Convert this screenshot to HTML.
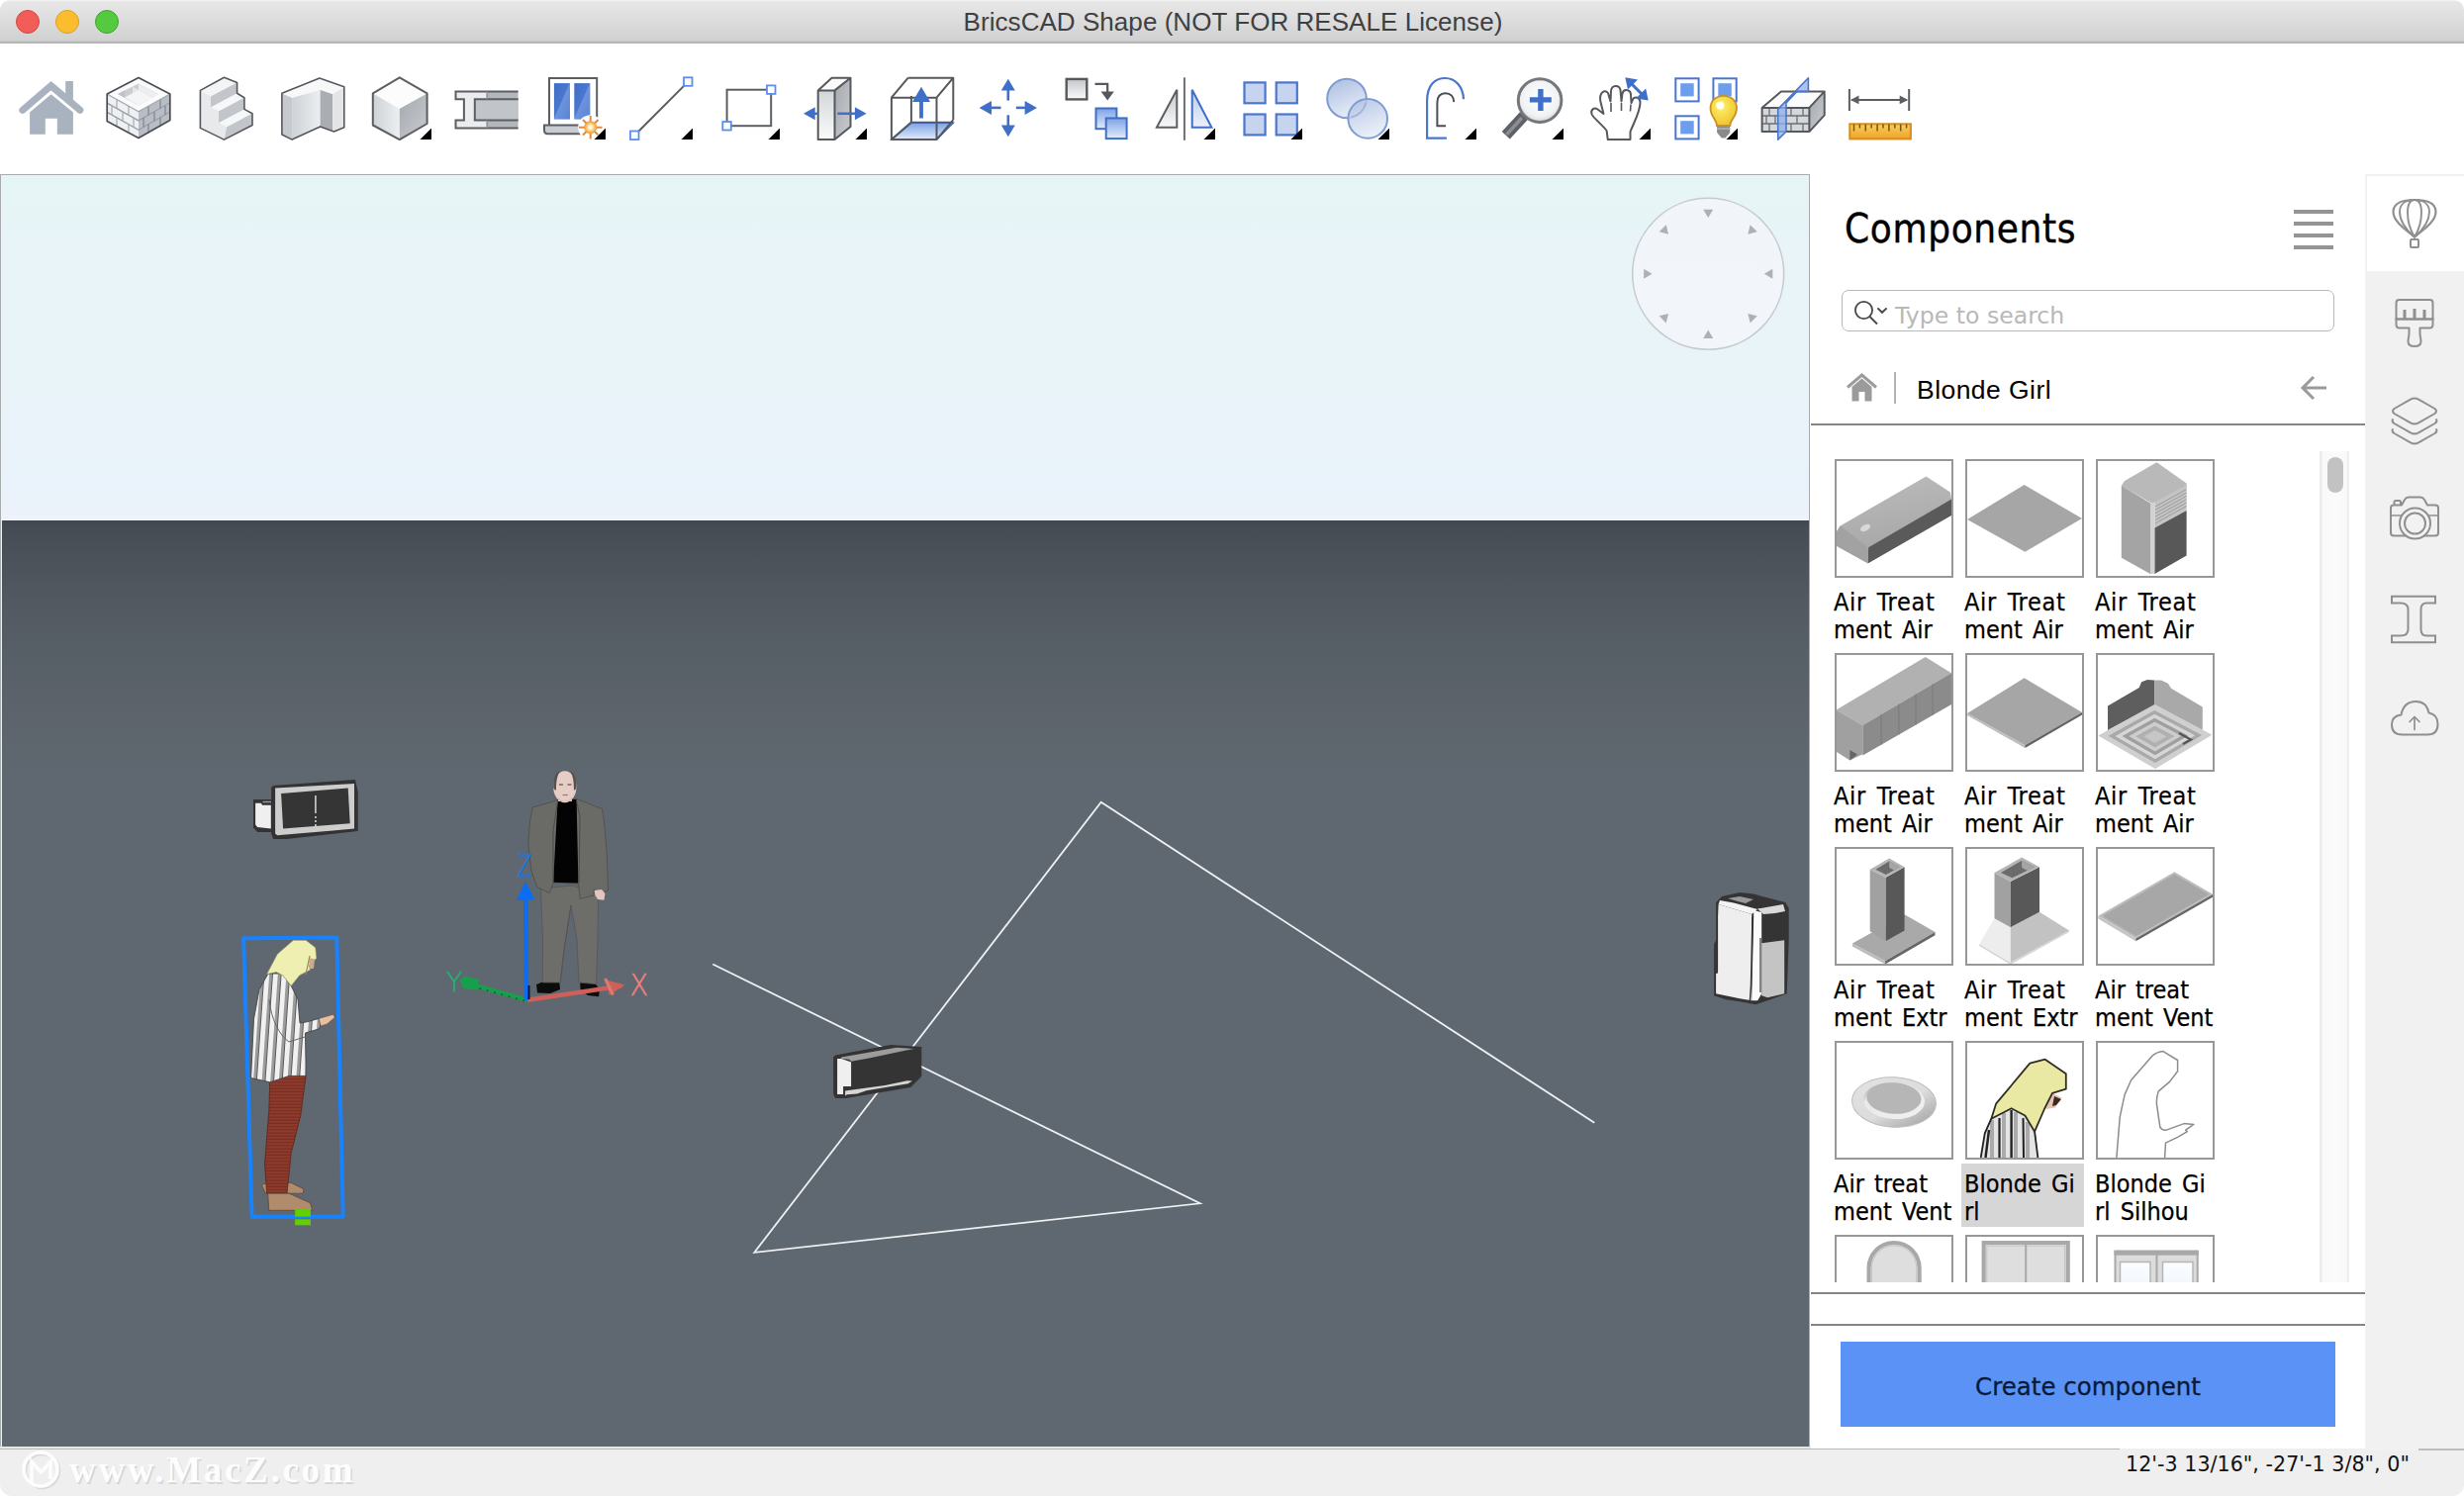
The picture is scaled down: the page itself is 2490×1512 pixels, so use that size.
<!DOCTYPE html>
<html lang="en">
<head>
<meta charset="utf-8">
<title>BricsCAD Shape (NOT FOR RESALE License)</title>
<style>
html,body{margin:0;padding:0;}
body{width:2490px;height:1512px;overflow:hidden;background:#fff;position:relative;font-family:"Liberation Sans","DejaVu Sans",sans-serif;color:#000;}
.abs{position:absolute;}
#titlebar{position:absolute;left:0;top:0;width:2490px;height:43px;background:linear-gradient(#f4f4f4 0,#e7e7e7 2px,#d1d1d1 41px,#c4c4c4 42px,#a9a9a9 43px);border-bottom:1px solid #b4b4b4;border-radius:10px 10px 0 0;}
#titlebar .t{position:absolute;left:0;width:2490px;top:7px;text-align:center;font-size:26px;line-height:30px;color:#404040;letter-spacing:0.05px;padding-left:2px;box-sizing:border-box;}
.tl{position:absolute;top:10px;width:24px;height:24px;border-radius:50%;box-sizing:border-box;}
#toolbar{position:absolute;left:0;top:44px;width:2490px;height:132px;background:#fff;}
.ic{position:absolute;top:33px;width:72px;height:72px;overflow:visible;}
#viewport{position:absolute;left:0;top:176px;width:1829px;height:1287px;box-sizing:border-box;border:1px solid #a9acac;border-width:1px 1px 0 1px;overflow:hidden;background:#5f6770;}
#sky{position:absolute;left:0;top:0;width:1827px;height:349px;background:linear-gradient(#e5f5f5 0%,#e8f4f8 18%,#e9f4f9 35%,#e9f4f9 60%,#e9f3fa 85%,#ebf2fa 96%,#eef2fa 100%);border-bottom:1px solid #f6fafc;box-sizing:border-box;}
#ground{position:absolute;left:0;top:349px;width:1827px;height:940px;background:linear-gradient(#40474e 0px,#454c53 6px,#4b5259 40px,#535a61 90px,#586067 140px,#5c636b 190px,#5e666e 230px,#5f6770 270px,#5f6770 100%);}
#panel{position:absolute;left:1830px;top:176px;width:560px;height:1288px;background:#fff;z-index:2;}
#tabs{position:absolute;left:2390px;top:176px;width:100px;height:1290px;background:#f1f1f1;z-index:2;}
#status{position:absolute;left:0;top:1462px;width:2490px;height:50px;background:linear-gradient(#e6e7e7 0,#e6e7e7 2px,#b7b7b7 2px,#b7b7b7 3.5px,#efefef 3.5px,#efefef 100%);box-sizing:border-box;border-radius:0 0 12px 12px;}
.pf{font-family:"DejaVu Sans","Liberation Sans",sans-serif;}
.th{width:120px;height:120px;box-sizing:border-box;border:2px solid #989898;overflow:hidden;background:#fff;}
.th svg{position:absolute;left:-2px;top:-2px;}
.lb{font-family:"DejaVu Sans Condensed","DejaVu Sans",sans-serif;font-stretch:condensed;font-size:25px;line-height:28px;word-spacing:3px;-webkit-text-stroke:0.25px #000;white-space:pre;color:#000;}
</style>
</head>
<body>
<div id="titlebar">
  <div class="tl" style="left:16px;background:#f25e57;border:1px solid #d5473f;"></div>
  <div class="tl" style="left:56px;background:#fbbd2e;border:1px solid #dc9f26;"></div>
  <div class="tl" style="left:96px;background:#55c93f;border:1px solid #3fa62d;"></div>
  <div class="t">BricsCAD Shape (NOT FOR RESALE License)</div>
</div>
<div id="toolbar">
<svg class="abs" style="left:0;top:0" width="2490" height="132" viewBox="0 44 2490 132">
<defs>
<linearGradient id="gL" x1="0" y1="0" x2="1" y2="0"><stop offset="0" stop-color="#cfd2d6"/><stop offset="1" stop-color="#eceef0"/></linearGradient>
<linearGradient id="gR" x1="0" y1="0" x2="1" y2="1"><stop offset="0" stop-color="#a4a8ad"/><stop offset="1" stop-color="#c9cccf"/></linearGradient>
<linearGradient id="gV" x1="0" y1="0" x2="0" y2="1"><stop offset="0" stop-color="#c3c6ca"/><stop offset="1" stop-color="#fafafa"/></linearGradient>
<linearGradient id="gB" x1="0" y1="0" x2="0" y2="1"><stop offset="0" stop-color="#7ea2e6"/><stop offset="1" stop-color="#e3ecfb"/></linearGradient>
<linearGradient id="gB2" x1="0" y1="0" x2="0" y2="1"><stop offset="0" stop-color="#b9caea"/><stop offset="1" stop-color="#eef2fa"/></linearGradient>
<linearGradient id="gC" x1="0" y1="0" x2="0.4" y2="1"><stop offset="0" stop-color="#a9bce0"/><stop offset="1" stop-color="#e6ecf7"/></linearGradient>
<linearGradient id="gPane" x1="0" y1="0" x2="1" y2="1"><stop offset="0" stop-color="#3f6cc4"/><stop offset="0.48" stop-color="#4a78cf"/><stop offset="0.5" stop-color="#6d93dc"/><stop offset="1" stop-color="#5a84d4"/></linearGradient>
<linearGradient id="gRul" x1="0" y1="0" x2="0" y2="1"><stop offset="0" stop-color="#f8cf5a"/><stop offset="1" stop-color="#eea22c"/></linearGradient>
<radialGradient id="gGlass" cx="0.5" cy="0.45" r="0.6"><stop offset="0" stop-color="#ffffff"/><stop offset="0.7" stop-color="#f1f2f4"/><stop offset="1" stop-color="#c9cdd2"/></radialGradient>
<radialGradient id="gBulb" cx="0.4" cy="0.35" r="0.7"><stop offset="0" stop-color="#fffbe0"/><stop offset="0.25" stop-color="#fbe65a"/><stop offset="1" stop-color="#eec22c"/></radialGradient>
<radialGradient id="gStar" cx="0.5" cy="0.5" r="0.5"><stop offset="0" stop-color="#fff"/><stop offset="0.35" stop-color="#fde9b0"/><stop offset="1" stop-color="#f0962c"/></radialGradient>
<linearGradient id="gSlab" x1="0" y1="0" x2="0" y2="1"><stop offset="0" stop-color="#d3d6d9"/><stop offset="1" stop-color="#fbfbfb"/></linearGradient>
</defs>
<g transform="translate(20 77)"><g fill="#a8b3bf"><polygon points="46.2,5.1 53.9,5.1 53.9,27 46.2,20.5"/><polygon points="10.1,58.8 10.1,36.5 31.6,18.2 53.9,36.5 53.9,58.8 37.8,58.8 37.8,42.7 25.8,42.7 25.8,58.8"/></g><path d="M2.8 34.3 L31.6 9.7 L60.9 34.3" fill="none" stroke="#a8b3bf" stroke-width="7" stroke-linecap="round" stroke-linejoin="miter"/></g>
<g transform="translate(108 77)"><polygon points="0.2,17.9 32,35.7 32,62.4 0.2,45.6" fill="#eef0f2"/><polygon points="32,35.7 63.8,17.9 63.8,44.5 32,62.4" fill="#b9bec6"/><polygon points="32,1.4 63.8,17.9 32,35.7 0.2,17.9" fill="#fbfbfb"/><polygon points="32,7.5 52,18 32,29.5 11,18" fill="#c9cdd2"/><polygon points="32,7.5 52,18 46,21.5 32,14" fill="#eceef0"/><polygon points="26,10.8 40,18 40,25 26,17.5" fill="#e4e6e9"/><polygon points="32,14 46,21.5 32,29.5 18,21.5" fill="#f4f5f6"/><polygon points="11,18 18,14.200 18,21.5 32,29.5 32,29.5" fill="#bfc3c9"/><path d="M0.2 27.1 L32 44.9 L63.8 26.7" stroke="#9aa0a8" stroke-width="1.3" fill="none"/><path d="M0.2 36.4 L32 54.2 L63.8 36.0" stroke="#9aa0a8" stroke-width="1.3" fill="none"/><path d="M10.0 23.4 L10.0 32.6" stroke="#a5abb3" stroke-width="1.2"/><path d="M22.0 30.1 L22.0 39.3" stroke="#a5abb3" stroke-width="1.2"/><path d="M5.0 29.8 L5.0 39.0" stroke="#a5abb3" stroke-width="1.2"/><path d="M16.0 36.0 L16.0 45.2" stroke="#a5abb3" stroke-width="1.2"/><path d="M27.0 42.1 L27.0 51.3" stroke="#a5abb3" stroke-width="1.2"/><path d="M10.0 41.9 L10.0 51.1" stroke="#a5abb3" stroke-width="1.2"/><path d="M22.0 48.6 L22.0 57.8" stroke="#a5abb3" stroke-width="1.2"/><path d="M42.0 30.1 L42.0 39.3" stroke="#7d848d" stroke-width="1.2"/><path d="M54.0 23.4 L54.0 32.6" stroke="#7d848d" stroke-width="1.2"/><path d="M37.0 42.1 L37.0 51.3" stroke="#7d848d" stroke-width="1.2"/><path d="M48.0 36.0 L48.0 45.2" stroke="#7d848d" stroke-width="1.2"/><path d="M59.0 29.8 L59.0 39.0" stroke="#7d848d" stroke-width="1.2"/><path d="M42.0 48.6 L42.0 57.8" stroke="#7d848d" stroke-width="1.2"/><path d="M54.0 41.8 L54.0 51.0" stroke="#7d848d" stroke-width="1.2"/><path d="M0.2 17.9 L32 35.7 L63.8 17.9" fill="none" stroke="#a2a7ae" stroke-width="1.2"/><path d="M32 1.4 L63.8 17.9 L63.8 44.5 L32 62.4 L0.2 45.6 L0.2 17.9 Z" fill="none" stroke="#4a4d52" stroke-width="1.7" stroke-linejoin="round"/></g>
<g transform="translate(196 77)"><polygon points="6.4,14.4 30.5,1.3 43.6,6.4 43.6,17.3 50.9,21.7 50.9,33.4 59,37.8 59,49.5 30.5,64.1 6.4,52.4" fill="#e7e9eb"/><polygon points="30.5,1.3 43.6,6.4 17,20.5 17,31 6.4,26 6.4,14.4" fill="#f3f4f5"/><polygon points="43.600,6.4 43.600,17.3 17,31.500 17,20.500" fill="#c2c5ca"/><polygon points="43.600,17.3 50.900,21.700 25,35.500 17,31.500" fill="#f6f7f8"/><polygon points="50.900,21.700 50.900,33.400 25,47.200 25,35.500" fill="#c2c5ca"/><polygon points="50.900,33.400 59,37.800 33,51.600 25,47.200" fill="#f6f7f8"/><polygon points="59,37.800 59,49.500 30.500,64.100 33,51.600" fill="#c2c5ca"/><polygon points="33,51.600 30.5,64.1 6.4,52.4 6.4,14.4 17,20.5 17,31.5 25,35.5 25,47.2" fill="#e7e9eb"/><path d="M6.4 14.4 L30.5 1.3 L43.6 6.4 L43.6 17.3 L50.9 21.7 L50.9 33.4 L59 37.8 L59 49.5 L30.5 64.1 L6.4 52.4 Z" fill="none" stroke="#55585d" stroke-width="1.6" stroke-linejoin="round"/></g>
<g transform="translate(284 77)"><polygon points="0.9,17.3 11.1,21.7 11.1,64.1 0.9,59" fill="#c6c9cd"/><polygon points="11.1,21.7 39.6,13.7 39.6,50.9 11.1,64.1" fill="url(#gL)"/><polygon points="39.6,13.7 52.1,18.1 52.1,55.3 39.6,50.9" fill="#aaaeb3"/><polygon points="52.1,18.1 63.8,10.8 63.8,51.7 53.5,56.1 52.1,55.3" fill="#e3e5e7"/><polygon points="0.9,17.3 38.9,2 63.8,10.8 52.1,18.1 39.6,13.7 11.1,21.7" fill="#f8f8f8"/><path d="M0.9 17.3 L38.9 2 L63.8 10.8 L63.8 51.7 L53.5 56.1 L39.6 50.9 L11.1 64.1 L0.9 59 Z" fill="none" stroke="#55585d" stroke-width="1.6" stroke-linejoin="round"/></g>
<g transform="translate(372 77)"><polygon points="4.8,17.3 31.8,32.7 31.8,64.1 4.8,49.5" fill="url(#gL)"/><polygon points="31.8,32.7 59.6,17.3 59.6,48 31.8,64.1" fill="url(#gR)"/><polygon points="31.8,1.3 59.6,17.3 31.8,32.7 4.8,17.3" fill="#fcfcfc"/><path d="M31.8 1.3 L59.6 17.3 L59.6 48 L31.8 64.1 L4.8 49.5 L4.8 17.3 Z" fill="none" stroke="#5b5e63" stroke-width="2" stroke-linejoin="round"/><polygon points="52.5,64 64,64 64,52.5" fill="#000"/></g>
<g transform="translate(460 77)"><rect x="32.2" y="15.4" width="31.4" height="37" fill="#b3b7bc"/><rect x="19.8" y="23.2" width="43.8" height="21.2" fill="#c1c4c8"/><path d="M0.5 15.4 L32.2 15.4 L32.2 23.2 L19.8 23.2 L19.8 44.4 L32.2 44.4 L32.2 52.4 L0.5 52.4 L0.5 44.4 L8.9 44.4 L8.9 23.2 L0.5 23.2 Z" fill="#ebecee"/><path d="M63.6 15.4 L0.5 15.4 L0.5 23.2 L8.9 23.2 L8.9 44.4 L0.5 44.4 L0.5 52.4 L63.6 52.4 M63.6 23.2 L19.8 23.2 L19.8 44.4 L63.6 44.4" fill="none" stroke="#5b5e63" stroke-width="2"/><path d="M32.2 15.4 L32.2 23.2 M32.2 44.4 L32.2 52.4" stroke="#8d9096" stroke-width="1.5"/></g>
<g transform="translate(548 77)"><rect x="7" y="2" width="48.200" height="48" fill="#fff" stroke="#5b5e63" stroke-width="2"/><rect x="11.9" y="7.1" width="16.1" height="36.5" fill="url(#gPane)"/><rect x="32.3" y="7.1" width="16.1" height="36.5" fill="url(#gPane)"/><path d="M2 49.5 L40 49.5 L40 58.2 L5.500 58.2 Q2 58.2 2 54.500 Z" fill="#c9cdd1" stroke="#5b5e63" stroke-width="2"/><circle cx="48.7" cy="51.7" r="12.500" fill="#fff"/><path d="M48.7 40 L48.7 63.500 M37 51.7 L60.500 51.7 M41 44 L56.500 59.500 M56.500 44 L41 59.500" stroke="#e8883a" stroke-width="2"/><circle cx="48.7" cy="51.7" r="6.5" fill="url(#gStar)"/><polygon points="52.5,64 64,64 64,52.5" fill="#000"/></g>
<g transform="translate(636 77)"><path d="M5.3 59.7 L59.3 5.6" stroke="#5b5e63" stroke-width="2"/><rect x="1.0" y="55.5" width="8.500" height="8.500" fill="#fff" stroke="#5b8def" stroke-width="1.8"/><rect x="55.0" y="1.3" width="8.500" height="8.500" fill="#fff" stroke="#5b8def" stroke-width="1.8"/><polygon points="52.5,64 64,64 64,52.5" fill="#000"/></g>
<g transform="translate(724 77)"><rect x="10.6" y="13.7" width="44.6" height="36.5" fill="none" stroke="#5b5e63" stroke-width="2"/><rect x="51.0" y="9.4" width="8.500" height="8.500" fill="#fff" stroke="#5b8def" stroke-width="1.8"/><rect x="6.3" y="46.0" width="8.500" height="8.500" fill="#fff" stroke="#5b8def" stroke-width="1.8"/><polygon points="52.5,64 64,64 64,52.5" fill="#000"/></g>
<g transform="translate(812 77)"><polygon points="14.7,14.4 31.5,14.4 31.5,64.1 14.7,64.1" fill="url(#gSlab)"/><polygon points="31.5,14.4 47.5,1.7 47.5,50.9 31.5,64.1" fill="url(#gR)"/><polygon points="14.7,14.4 28.5,1.7 47.5,1.7 31.5,14.4" fill="#fafafa"/><path d="M14.7 14.4 L28.5 1.7 L47.5 1.7 L47.5 50.9 L31.5 64.1 L14.7 64.1 Z M14.7 14.4 L31.5 14.4 L47.5 1.7 M31.5 14.4 L31.5 64.1" fill="none" stroke="#55585d" stroke-width="2" stroke-linejoin="round"/><g fill="#3f6fc6" stroke="#3f6fc6"><polygon points="0,37.8 11.7,31.300 11.7,44.300" stroke="none"/><path d="M11 37.8 L15 37.8" stroke-width="2.5"/><path d="M34.4 37.8 L52.500 37.8" stroke-width="2.5"/><polygon points="63.6,37.8 51.900,31.300 51.900,44.300" stroke="none"/></g><polygon points="52.5,64 64,64 64,52.5" fill="#000"/></g>
<g transform="translate(900 77)"><polygon points="0.9,64.1 20.9,47.3 63.3,47.3 46.5,64.1" fill="url(#gB)" stroke="#3f6fc6" stroke-width="1.5"/><path d="M0.9 21.7 L46.5 21.7 L46.5 64.1 L0.9 64.1 Z M17.7 1.7 L63.3 1.7 L63.3 44.1 M17.7 1.7 L0.9 21.7 M63.3 1.7 L46.5 21.7 M63.3 44.1 L46.5 64.1 M20.900 20 L20.900 46.500 L2 63" fill="none" stroke="#55585d" stroke-width="2" stroke-linejoin="round"/><path d="M20.900 46.500 L63.3 46.500" stroke="#55585d" stroke-width="1.5"/><g fill="#3f6fc6"><polygon points="31,10.8 40,26.1 22,26.1"/><rect x="29.100" y="25" width="3.8" height="17.5"/></g></g>
<g transform="translate(988 77)"><g fill="#3f6fc6" stroke="#3f6fc6" stroke-width="2.600"><polygon points="30.8,2.7 37.800,14.4 23.800,14.4" stroke="none"/><path d="M30.8 14 L30.8 24.6"/><polygon points="30.8,61.2 37.800,49.5 23.800,49.5" stroke="none"/><path d="M30.8 39.3 L30.8 50"/><polygon points="1.6,31.9 14,24.900 14,38.900" stroke="none"/><path d="M13.500 31.9 L23.5 31.9"/><polygon points="60,31.9 47.6,24.900 47.6,38.900" stroke="none"/><path d="M38.8 31.9 L48 31.9"/></g></g>
<g transform="translate(1076 77)"><rect x="1.700" y="2.900" width="20.600" height="20.500" fill="url(#gV)" stroke="#55585d" stroke-width="2.4"/><path d="M30.5 7.8 L43.2 7.8 L43.2 16" fill="none" stroke="#55585d" stroke-width="2.2"/><polygon points="36.600,15.4 49.800,15.4 43.2,24.6" fill="#55585d"/><rect x="31.500" y="32.500" width="20.900" height="20.700" fill="url(#gB)" stroke="#3f6fc6" stroke-width="2"/><rect x="41.700" y="42.400" width="20.900" height="20.700" fill="url(#gB)" stroke="#3f6fc6" stroke-width="2"/></g>
<g transform="translate(1164 77)"><path d="M32.9 1.3 L32.9 64.8" stroke="#6b6e73" stroke-width="2"/><polygon points="25.3,13.7 25.3,51.7 4.9,51.7" fill="url(#gV)" stroke="#5b5e63" stroke-width="2"/><polygon points="40.7,13.7 40.7,51.7 60.4,51.7" fill="url(#gB2)" stroke="#3f6fc6" stroke-width="2"/><polygon points="52.5,64 64,64 64,52.5" fill="#000"/></g>
<g transform="translate(1252 77)"><rect x="5.5" y="6.4" width="21.100" height="20.900" fill="#c6d4f0" stroke="#4a76cc" stroke-width="2.2"/><rect x="5.5" y="38.5" width="21.100" height="20.900" fill="#c6d4f0" stroke="#4a76cc" stroke-width="2.2"/><rect x="37.7" y="6.4" width="21.100" height="20.900" fill="#c6d4f0" stroke="#4a76cc" stroke-width="2.2"/><rect x="37.7" y="38.5" width="21.100" height="20.900" fill="#c6d4f0" stroke="#4a76cc" stroke-width="2.2"/><polygon points="52.5,64 64,64 64,52.5" fill="#000"/></g>
<g transform="translate(1340 77)"><circle cx="21" cy="22.5" r="19.800" fill="url(#gC)" stroke="#7f9bd2" stroke-width="2"/><circle cx="42.2" cy="42.9" r="19.800" fill="url(#gC)" fill-opacity="0.85" stroke="#7f9bd2" stroke-width="2"/><path d="M40.300 27 A19.800 19.800 0 0 1 25.500 41.500" fill="none" stroke="#9fb0d0" stroke-width="1.5"/><polygon points="52.5,64 64,64 64,52.5" fill="#000"/></g>
<g transform="translate(1428 77)"><path d="M33.9 62.6 L14.1 62.6 L14.1 25.4 C14.1 9 22 2 32.4 2 C43 2 50.500 11 51 23.2" fill="none" stroke="#4a76cc" stroke-width="2.2"/><path d="M33.1 50.2 L24.4 50.2 L24.4 26.8 C24.4 20 28 17.3 32.800 17.3 C38 17.300 41 21 41.200 26.1" fill="none" stroke="#4b4e53" stroke-width="2"/><polygon points="52.5,64 64,64 64,52.5" fill="#000"/></g>
<g transform="translate(1516 77)"><path d="M24 40 L5.800 59.800" stroke="#5e6165" stroke-width="11" stroke-linecap="butt"/><path d="M22 42 L6.500 59" stroke="#8a8d92" stroke-width="3.500" stroke-linecap="butt"/><circle cx="40.1" cy="24.6" r="21.800" fill="url(#gGlass)" stroke="#74777c" stroke-width="3"/><path d="M29.9 23.900 L51.8 23.900 M40.900 13 L40.900 34.9" stroke="#3f6fc6" stroke-width="5.400"/><polygon points="52.5,64 64,64 64,52.5" fill="#000"/></g>
<g transform="translate(1604 77)"><path d="M20.8 64.100 L19.600 55 C14 48 6 42 4.600 38.500 C3 34 7 31 10.500 33.500 L16.500 38 L13.500 26 C11.500 16 18 13 21 17 L23.500 25.500 L24 15 C24.500 8.500 32.500 8.500 33.500 14 L34.500 25.500 L35.500 17.500 C36.500 12.500 43 13 44 18 L44.500 27 L46 23.500 C48 20 53.500 21.500 53.500 26.500 C53.500 36 47 47 43.500 56 L43.500 64.100 Z" fill="#fff" stroke="#55585d" stroke-width="2" stroke-linejoin="round"/><path d="M24 27 L24 36 M34.500 27 L34.500 35 M44 28.500 L43.500 35.500" stroke="#55585d" stroke-width="1.6"/><g fill="#3f6fc6"><polygon points="38.3,1.3 51,3.500 41,13.500"/><polygon points="61.7,24.6 49,22.500 59.200,12.500"/></g><path d="M44 7 L56 19" stroke="#3f6fc6" stroke-width="3"/><polygon points="52.5,64 64,64 64,52.5" fill="#000"/></g>
<g transform="translate(1692 77)"><rect x="1.3" y="2.3" width="23.300" height="23.100" fill="#fff" stroke="#4a76cc" stroke-width="2"/><rect x="6.2" y="7.2" width="13.500" height="13.200" fill="#6d9eed"/><rect x="39.4" y="2.3" width="23.300" height="23.100" fill="#fff" stroke="#4a76cc" stroke-width="2"/><rect x="44.3" y="7.2" width="13.500" height="13.200" fill="#6d9eed"/><rect x="1.3" y="40.3" width="23.300" height="23.100" fill="#fff" stroke="#4a76cc" stroke-width="2"/><rect x="6.2" y="45.2" width="13.500" height="13.200" fill="#6d9eed"/><path d="M43.100 49.500 L56.200 49.500 L56.200 57 L51.500 62.600 L47.800 62.600 L43.100 57 Z" fill="#8a8a8a"/><path d="M43.100 53 L56.200 53" stroke="#b5b5b5" stroke-width="1.5"/><path d="M43 50 C43 44 36.500 41 36.500 32.500 C36.500 24.500 42.500 19.800 49.700 19.800 C57 19.800 63 24.500 63 32.500 C63 41 56.300 44 56.300 50 Z" fill="url(#gBulb)" stroke="#c8922a" stroke-width="1.8"/><circle cx="46.300" cy="29.500" r="4" fill="#fff" fill-opacity="0.9"/><polygon points="52.5,64 64,64 64,52.5" fill="#000"/></g>
<g transform="translate(1780 77)"><polygon points="0.6,31.9 19.9,15.4 63.7,15.4 48.4,31.9" fill="#fbfbfb"/><rect x="0.6" y="31.9" width="47.800" height="24.2" fill="#d5d8db"/><path d="M0.6 40 L48.4 40" stroke="#6b6e73" stroke-width="1.3"/><path d="M0.6 48 L48.4 48" stroke="#6b6e73" stroke-width="1.3"/><path d="M8 31.9 L8 40.0" stroke="#6b6e73" stroke-width="1.3"/><path d="M30 31.9 L30 40.0" stroke="#6b6e73" stroke-width="1.3"/><path d="M42 31.9 L42 40.0" stroke="#6b6e73" stroke-width="1.3"/><path d="M5 40.0 L5 48.0" stroke="#6b6e73" stroke-width="1.3"/><path d="M14 40.0 L14 48.0" stroke="#6b6e73" stroke-width="1.3"/><path d="M36 40.0 L36 48.0" stroke="#6b6e73" stroke-width="1.3"/><path d="M8 48.0 L8 56.1" stroke="#6b6e73" stroke-width="1.3"/><path d="M30 48.0 L30 56.1" stroke="#6b6e73" stroke-width="1.3"/><path d="M42 48.0 L42 56.1" stroke="#6b6e73" stroke-width="1.3"/><polygon points="48.4,31.9 63.7,15.4 63.7,39.3 48.4,56.1" fill="url(#gR)"/><path d="M0.6 31.9 L19.9 15.4 L63.7 15.4 L63.7 39.3 L48.4 56.1 L0.6 56.1 Z M0.6 31.9 L48.4 31.9 L63.7 15.4 M48.4 31.9 L48.4 56.1" fill="none" stroke="#55585d" stroke-width="2" stroke-linejoin="round"/><polygon points="16.7,33.4 47.4,1.7 47.4,15.4 36,15.400 25,27 25,56 16.7,64.1" fill="#8fb0ea" fill-opacity="0.75" stroke="#4a76cc" stroke-width="1.6" stroke-linejoin="round"/></g>
<g transform="translate(1868 77)"><path d="M0.9 13 L0.9 34.9 M61.2 13 L61.2 34.9 M3 23.9 L59 23.9" stroke="#5b5e63" stroke-width="2"/><polygon points="2,23.9 10.500,19.500 10.500,28.300" fill="#5b5e63"/><polygon points="60.200,23.9 51.700,19.500 51.700,28.300" fill="#5b5e63"/><rect x="1.300" y="48.300" width="61.600" height="15.100" fill="url(#gRul)" stroke="#d78c1e" stroke-width="2"/><path d="M5.5 48.500 L5.5 55.5" stroke="#7a5410" stroke-width="1.5"/><path d="M11.4 48.500 L11.4 52.5" stroke="#7a5410" stroke-width="1.5"/><path d="M17.3 48.500 L17.3 55.5" stroke="#7a5410" stroke-width="1.5"/><path d="M23.2 48.500 L23.2 52.5" stroke="#7a5410" stroke-width="1.5"/><path d="M29.1 48.500 L29.1 55.5" stroke="#7a5410" stroke-width="1.5"/><path d="M35.0 48.500 L35.0 52.5" stroke="#7a5410" stroke-width="1.5"/><path d="M40.9 48.500 L40.9 55.5" stroke="#7a5410" stroke-width="1.5"/><path d="M46.8 48.500 L46.8 52.5" stroke="#7a5410" stroke-width="1.5"/><path d="M52.7 48.500 L52.7 55.5" stroke="#7a5410" stroke-width="1.5"/><path d="M58.6 48.500 L58.6 52.5" stroke="#7a5410" stroke-width="1.5"/></g>
</svg>
</div>
<div id="viewport">
  <div id="sky"></div>
  <div id="ground"></div>
  <div class="abs" style="left:0;top:0;width:1px;height:1287px;background:#eef2f3;"></div>
<svg class="abs" style="left:-1px;top:-1px" width="1830" height="1287" viewBox="0 176 1830 1287">
<circle cx="1726.2" cy="276.8" r="76.5" fill="#f4f6fa" fill-opacity="0.75" stroke="#c5cbd1" stroke-width="1.6"/>
<polygon points="0,-4.800 5,3.600 -5,3.600" fill="#adb1b6" transform="translate(1726.2 215.3) rotate(180)"/>
<polygon points="0,-4.800 5,3.600 -5,3.600" fill="#adb1b6" transform="translate(1769.7 233.3) rotate(225)"/>
<polygon points="0,-4.800 5,3.600 -5,3.600" fill="#adb1b6" transform="translate(1787.7 276.8) rotate(270)"/>
<polygon points="0,-4.800 5,3.600 -5,3.600" fill="#adb1b6" transform="translate(1769.7 320.3) rotate(315)"/>
<polygon points="0,-4.800 5,3.600 -5,3.600" fill="#adb1b6" transform="translate(1726.2 338.3) rotate(360)"/>
<polygon points="0,-4.800 5,3.600 -5,3.600" fill="#adb1b6" transform="translate(1682.7 320.3) rotate(405)"/>
<polygon points="0,-4.800 5,3.600 -5,3.600" fill="#adb1b6" transform="translate(1664.7 276.8) rotate(450)"/>
<polygon points="0,-4.800 5,3.600 -5,3.600" fill="#adb1b6" transform="translate(1682.7 233.3) rotate(495)"/>
<g stroke="#eef0f2" stroke-width="1.800" fill="none"><path d="M720.3 974.5 L1212.7 1216.3 L762.4 1265.8 L1112.7 810.8 L1611.2 1134.8"/></g>
<polygon points="274.1,796.1 276.1,794.1 359.0,788.0 361.7,800.1 361.7,839.9 289.8,847.9 276.1,847.9 274.1,842.2" fill="#333" />
<polygon points="278.1,796.4 358.0,792.1 358.0,837.5 336.3,839.5 280.1,844.2 278.1,842.2" fill="#cdcdcd" />
<polygon points="284.1,802.1 351.7,796.4 353.7,832.2 286.1,837.5" fill="#353535" />
<path d="M318.9 804 L318.9 822" stroke="#d0d0d0" stroke-width="1.6"/><path d="M318.9 825 L318.9 836" stroke="#d0d0d0" stroke-width="1.6" stroke-dasharray="2 2"/>
<polygon points="256.0,808.1 274.8,808.1 274.8,840.9 260.1,840.9 256.0,836.2" fill="#333" />
<polygon points="258.1,811.8 264.0,811.8 265.0,813.8 273.8,813.8 273.8,837.5 260.1,835.9 258.1,833.5" fill="#efefef" />
<path d="M265.500 810.5 L274 810.5" stroke="#9a9a9a" stroke-width="1.5"/>
<g>
<polygon points="542.0,995.0 552.0,991.0 565.4,993.0 566.0,1000.0 556.0,1004.0 543.0,1003.5" fill="#0c0c0c" />
<polygon points="586.2,993.0 600.0,992.0 606.0,1000.0 605.0,1007.2 594.0,1006.0 586.5,1000.0" fill="#0c0c0c" />
<polygon points="546.5,898.0 578.0,895.0 604.5,903.0 604.0,950.0 602.5,994.6 585.0,993.0 583.0,950.0 577.0,915.0 570.0,960.0 566.3,993.0 548.3,993.0 548.5,950.0" fill="#6d6d69" stroke="#555" stroke-width="0.8"/>
<path d="M577 915 L570 960 L566.3 992" stroke="#565652" stroke-width="1" fill="none"/>
<polygon points="538.3,816.0 556.0,811.0 566.0,807.5 583.0,807.5 592.0,811.0 608.7,817.7 611.0,835.0 613.2,861.0 614.5,900.0 607.0,903.0 600.0,899.0 600.0,905.0 586.2,908.5 584.5,893.0 559.0,892.0 555.5,902.6 543.0,897.0 537.0,880.0 533.8,853.8 535.5,830.0" fill="#6a6a66" stroke="#50504c" stroke-width="0.9"/>
<polygon points="563.6,808.0 582.6,808.0 584.4,892.6 559.1,891.7" fill="#030303" />
<path d="M563.600 809 L559 840 L559 892 M582.600 809 L586 826 L585 892" stroke="#4e4e4a" stroke-width="1.1" fill="none"/>
<polygon points="600.6,900.0 608.0,899.0 611.4,903.0 610.5,909.8 604.0,909.0 601.5,905.0" fill="#e3c6bd" />
<ellipse cx="570.8" cy="795.2" rx="11.7" ry="16" fill="#e6cdc6"/>
<path d="M559.300 797 C558.500 785 563 779.500 566 779.500 C562.500 784 562 792 562 799 Z M582.300 797 C583 785 579 779.500 576 779.500 C579.500 784 580 792 580 799 Z" fill="#55534f"/>
<path d="M565 793 L569 793 M573.500 793 L577.500 793" stroke="#7d6660" stroke-width="1.4"/><path d="M568.500 803.500 L574 803.500" stroke="#a07c74" stroke-width="1.2"/><path d="M564 806 Q570.800 813 578 806 L578 810 L564 810 Z" fill="#d9bdb5"/>
</g>
<g>
<path d="M532.9 1010.8 L469 993" stroke="#17a04c" stroke-width="4.600"/><path d="M530 1011.500 L476 996.500" stroke="#0b5c2a" stroke-width="1.600" stroke-dasharray="1.600 6"/>
<path d="M484 990 L470 986.500 L464.500 991 L468 998.500 L481 1001 Z" fill="#17a04c"/>
<path d="M532.9 1010.8 L628 996.500" stroke="#cf5f59" stroke-width="4.400"/>
<path d="M613 990.500 L631.500 995.500 L615.500 1006 Z" fill="#cf5f59"/><path d="M611.500 989 L619.500 1005.500" stroke="#dd7a73" stroke-width="3"/>
<path d="M532 1010.8 L531.3 906" stroke="#0a6df2" stroke-width="4.600"/><polygon points="531.1,890.8 540.500,909.8 522,909.8" fill="#0a6df2"/>
<path d="M534.500 996 L534.500 1010" stroke="#04123a" stroke-width="2"/>
<text transform="translate(522.5 886) scale(0.7 1)" font-family="&quot;DejaVu Sans Light&quot;,&quot;DejaVu Sans&quot;,sans-serif" font-weight="200" font-size="31.5" fill="#1278ee" stroke="#1278ee" stroke-width="0.5">Z</text>
<text transform="translate(451 1002)" font-family="&quot;DejaVu Sans Light&quot;,&quot;DejaVu Sans&quot;,sans-serif" font-weight="200" font-size="26.7" fill="#22b070" stroke="#22b070" stroke-width="0.5">Y</text>
<text transform="translate(636.5 1006) scale(0.9 1)" font-family="&quot;DejaVu Sans Light&quot;,&quot;DejaVu Sans&quot;,sans-serif" font-weight="200" font-size="30" fill="#f0807e" stroke="#f0807e" stroke-width="0.5">X</text>
</g>
<g>
<polygon points="264.3,1197.6 272.8,1194.4 294.2,1195.5 307.1,1201.9 306.0,1206.2 268.5,1206.2" fill="#b08c6c" stroke="#5a4838" stroke-width="0.8"/>
<defs><pattern id="pst" width="4" height="3.2" patternUnits="userSpaceOnUse"><rect width="4" height="3.2" fill="#8c3c2c"/><rect y="2.100" width="4" height="1.100" fill="#7a2c20"/></pattern><pattern id="sst" width="8.600" height="8" patternUnits="userSpaceOnUse" patternTransform="rotate(4)"><rect width="8.600" height="8" fill="#f1f1f1"/><rect x="4.800" width="2.600" height="8" fill="#9b9b9b"/><rect x="7.400" width="1.200" height="8" fill="#5a5a5a"/></pattern></defs>
<polygon points="272.8,1091.0 292.1,1086.0 309.2,1087.0 306.0,1110.0 303.9,1127.0 294.2,1165.5 290.0,1206.2 269.6,1206.2 267.5,1176.2 271.8,1122.7" fill="url(#pst)" stroke="#5c2418" stroke-width="0.8"/>
<polygon points="270.7,1206.2 292.1,1206.2 313.5,1215.8 315.6,1223.3 271.8,1223.3" fill="#b08c6c" stroke="#5a4838" stroke-width="0.8"/>
<polygon points="271.0,984.0 262.0,1000.0 256.5,1030.0 253.6,1089.5 272.8,1093.8 292.1,1087.4 309.2,1087.4 308.5,1044.0 322.0,1040.0 324.5,1037.0 322.1,1029.5 310.3,1032.8 303.0,1034.0 301.0,1010.0 294.2,996.4 285.0,984.0" fill="url(#sst)" stroke="#444" stroke-width="0.9"/>
<path d="M272 1010 C274 1030 282 1046 292 1053 L308 1048" stroke="#666" stroke-width="1" fill="none"/>
<polygon points="322.1,1029.5 337.0,1025.3 338.1,1028.5 330.6,1034.9 324.2,1037.0" fill="#e6bea0" stroke="#6a5040" stroke-width="0.6"/>
<polygon points="269.6,984.6 280.3,964.3 296.4,950.3 309.2,950.3 318.8,957.8 319.9,968.5 312.4,976.0 313.5,980.3 302.8,985.7 294.2,996.4 285.7,985.7 279.2,982.5" fill="#efefb2" stroke="#8a8a60" stroke-width="0.6"/>
<polygon points="312.4,968.5 318.0,969.0 317.0,979.0 312.5,979.0" fill="#cfa890" />
<path d="M313 966 L309 985" stroke="#8a8a5a" stroke-width="1.2"/>
<polygon points="246.1,948.2 340.3,947.6 346.7,1229.7 254.6,1229.7" fill="none" stroke="#1883ff" stroke-width="4" stroke-linejoin="round"/>
<rect x="298.100" y="1222.200" width="15.800" height="7.500" fill="#5fd000"/><rect x="298.100" y="1232.300" width="15.800" height="6" fill="#5fd000"/>
</g>
<polygon points="842.1,1068.4 844.1,1066.4 900.2,1056.1 931.3,1058.1 931.3,1087.8 920.3,1098.9 854.8,1109.9 844.1,1109.9 842.1,1105.6" fill="#343434" />
<polygon points="850.1,1068.4 906.2,1058.7 923.6,1060.1 913.6,1062.1 878.2,1069.4 860.1,1072.8 858.1,1070.8 850.1,1070.1" fill="#9c9c9c" />
<polygon points="846.1,1070.1 850.1,1070.1 858.1,1072.8 860.1,1073.5 860.1,1097.9 852.1,1097.9 852.1,1105.9 846.1,1105.9" fill="#efefef" />
<polygon points="854.1,1102.5 894.2,1096.9 916.9,1092.2 922.0,1092.5 917.6,1095.2 875.5,1102.2 866.1,1105.6 856.1,1106.2 854.1,1107.6" fill="#d6d6d6" />
<polygon points="1734.1,912.1 1740.1,906.1 1758.1,902.1 1772.2,903.6 1804.2,912.1 1807.7,918.1 1807.7,950.2 1805.7,1004.3 1786.2,1011.3 1774.2,1015.3 1758.1,1012.3 1744.1,1010.3 1732.1,1006.3 1732.1,954.2 1734.1,950.2" fill="#343434" />
<polygon points="1738.0,910.0 1752.0,912.5 1776.0,919.0 1770.2,924.1 1736.6,914.1" fill="#f4f4f4" />
<polygon points="1746.0,908.0 1758.0,906.0 1772.0,909.0 1764.0,913.0 1756.0,911.0" fill="#9a9a9a" />
<polygon points="1776.0,918.5 1802.0,914.0 1804.0,921.0 1794.0,923.0 1782.0,924.0" fill="#d9d9d9" />
<polygon points="1736.6,914.1 1770.2,924.1 1770.2,1011.3 1758.1,1009.3 1734.1,1004.3 1734.1,984.3 1736.1,983.3 1736.1,926.1" fill="#eeeeee" />
<polygon points="1772.2,920.1 1780.2,922.1 1780.2,1004.3 1776.2,1011.3 1770.2,1011.3 1772.2,927.1" fill="#fbfbfb" />
<polygon points="1780.2,953.2 1803.2,950.2 1803.2,1004.3 1786.2,1008.3 1780.2,1006.3" fill="#c4c4c4" />
<path d="M1771 927 L1769.500 996 L1768.500 1011" stroke="#333" stroke-width="1.500" fill="none"/><path d="M1779 948 L1779 1003" stroke="#333" stroke-width="1.200"/>
</svg>
</div>
<div id="panel">
<div class="pf abs" style="left:34px;top:31px;font-family:'DejaVu Sans Condensed','DejaVu Sans',sans-serif;font-stretch:condensed;font-size:40px;line-height:48px;letter-spacing:0.65px;color:#000;-webkit-text-stroke:0.4px #000;">Components</div>
<div class="abs" style="left:488px;top:36px;width:40px;height:4px;background:#949494;"></div>
<div class="abs" style="left:488px;top:48px;width:40px;height:4px;background:#949494;"></div>
<div class="abs" style="left:488px;top:60px;width:40px;height:4px;background:#949494;"></div>
<div class="abs" style="left:488px;top:72px;width:40px;height:4px;background:#949494;"></div>
<div class="abs" style="left:31px;top:117px;width:498px;height:42px;box-sizing:border-box;border:1px solid #b9b9b9;border-radius:7px;background:#fff;"></div>
<svg class="abs" style="left:42px;top:125px" width="40" height="32" viewBox="0 0 40 32"><circle cx="11.5" cy="12.5" r="8.6" fill="none" stroke="#4a4a4a" stroke-width="1.8"/><path d="M17.5 19 L25 26.5" stroke="#4a4a4a" stroke-width="2" fill="none"/><path d="M25.4 10.4 L30 14.8 L34.6 10.4" stroke="#4a4a4a" stroke-width="2" fill="none"/></svg>
<div class="abs" style="left:85px;top:128px;font-family:'DejaVu Sans',sans-serif;font-size:23.6px;line-height:30px;color:#b8b8b8;white-space:pre;">Type to search</div>
<svg class="abs" style="left:35px;top:200px" width="34" height="32" viewBox="0 0 34 32"><path d="M2 15.5 L16.5 3 L31 15.5" fill="none" stroke="#9b9b9b" stroke-width="3"/><path d="M6.5 15 L16.5 6.5 L26.5 15 L26.5 29.5 L19.5 29.5 L19.5 20 L13.5 20 L13.5 29.5 L6.5 29.5 Z" fill="#9b9b9b"/></svg>
<div class="abs" style="left:84px;top:200px;width:2px;height:32px;background:#b4b4b4;"></div>
<div class="abs" style="left:107px;top:203px;font-family:'Liberation Sans',sans-serif;font-size:26.5px;line-height:30px;letter-spacing:0.45px;color:#000;white-space:pre;">Blonde Girl</div>
<svg class="abs" style="left:494px;top:202px" width="30" height="28" viewBox="0 0 30 28"><path d="M14 3 L3 14 L14 25 M3 14 L27 14" fill="none" stroke="#9a9a9a" stroke-width="3"/></svg>
<div class="abs" style="left:0;top:252px;width:560px;height:2px;background:#858585;"></div>
<div class="abs" id="scroll" style="left:0;top:254px;width:560px;height:866px;overflow:hidden;">
<div class="abs th" style="left:24px;top:34px;"><svg width="120" height="120" viewBox="0 0 120 120"><defs><linearGradient id="g1a" x1="0" y1="0" x2="0.3" y2="1"><stop offset="0" stop-color="#bcbcbc"/><stop offset="1" stop-color="#a9a9a9"/></linearGradient></defs><polygon points="5.7,67.4 92.5,17.4 116.9,33.6 118.0,41.0 34.1,89.5 1.6,74.0" fill="url(#g1a)" /><polygon points="1.6,74.0 5.7,67.4 34.1,89.5 33.6,105.5 1.6,87.7" fill="#a2a2a2" /><polygon points="34.1,89.2 118.0,40.6 118.0,57.0 33.6,105.5" fill="#5a5a5a" /><ellipse cx="31" cy="69.5" rx="5.5" ry="3" fill="#d8d8d8" transform="rotate(-28 31 69.5)"/></svg></div>
<div class="abs lb" style="left:23px;top:165px;"><span style="letter-spacing:0.7px">Air Treat</span><br>ment Air</div>
<div class="abs th" style="left:156px;top:34px;"><svg width="120" height="120" viewBox="0 0 120 120"><polygon points="2.0,61.0 59.6,26.0 118.0,60.0 60.4,93.8" fill="#a6a6a6" /></svg></div>
<div class="abs lb" style="left:155px;top:165px;"><span style="letter-spacing:0.7px">Air Treat</span><br>ment Air</div>
<div class="abs th" style="left:288px;top:34px;"><svg width="120" height="120" viewBox="0 0 120 120"><polygon points="25.8,26.8 29.1,21.9 61.5,3.2 91.6,24.4 91.6,29.0 57.0,45.0" fill="#b9b9b9" /><polygon points="25.8,26.8 55.0,44.6 55.0,116.0 25.8,99.8" fill="#a4a4a4" /><polygon points="55.0,44.6 59.5,43.5 59.5,116.0 55.0,116.0" fill="#d2d2d2" /><polygon points="59.5,43.5 91.6,26.0 91.6,52.0 59.5,69.5" fill="#c4c4c4" /><path d="M60 48.0 L91.6 30.5" stroke="#9a9a9a" stroke-width="1"/><path d="M60 51.4 L91.6 33.9" stroke="#9a9a9a" stroke-width="1"/><path d="M60 54.8 L91.6 37.3" stroke="#9a9a9a" stroke-width="1"/><path d="M60 58.2 L91.6 40.7" stroke="#9a9a9a" stroke-width="1"/><path d="M60 61.6 L91.6 44.1" stroke="#9a9a9a" stroke-width="1"/><path d="M60 65.0 L91.6 47.5" stroke="#9a9a9a" stroke-width="1"/><polygon points="59.5,69.5 91.6,52.0 91.6,97.4 59.5,116.0" fill="#585858" /></svg></div>
<div class="abs lb" style="left:287px;top:165px;"><span style="letter-spacing:0.7px">Air Treat</span><br>ment Air</div>
<div class="abs th" style="left:24px;top:230px;"><svg width="120" height="120" viewBox="0 0 120 120"><polygon points="1.6,57.6 91.7,4.1 118.0,20.3 28.4,73.1" fill="#b1b1b1" /><polygon points="1.6,57.6 28.4,73.1 28.4,102.3 15.4,108.5 1.6,99.8" fill="#a0a0a0" /><polygon points="28.4,73.1 118.0,20.3 118.0,52.0 28.4,103.5" fill="#8b8b8b" /><path d="M47.1 62.1 L47.1 92.7" stroke="#7a7a7a" stroke-width="1"/><path d="M64.9 51.6 L64.9 82.5" stroke="#7a7a7a" stroke-width="1"/><path d="M82.0 41.5 L82.0 72.7" stroke="#7a7a7a" stroke-width="1"/><path d="M99.0 31.4 L99.0 62.9" stroke="#7a7a7a" stroke-width="1"/><polygon points="15.4,98.0 23.0,102.5 15.4,108.5" fill="#666" /></svg></div>
<div class="abs lb" style="left:23px;top:361px;"><span style="letter-spacing:0.7px">Air Treat</span><br>ment Air</div>
<div class="abs th" style="left:156px;top:230px;"><svg width="120" height="120" viewBox="0 0 120 120"><polygon points="2.0,60.9 59.6,25.2 118.0,60.0 60.4,93.3" fill="#a6a6a6" /><polygon points="2.0,60.9 60.4,93.3 60.4,96.0 2.0,63.0" fill="#bdbdbd" /><polygon points="60.4,93.3 118.0,60.0 118.0,62.5 60.4,96.0" fill="#636363" /></svg></div>
<div class="abs lb" style="left:155px;top:361px;"><span style="letter-spacing:0.7px">Air Treat</span><br>ment Air</div>
<div class="abs th" style="left:288px;top:230px;"><svg width="120" height="120" viewBox="0 0 120 120"><polygon points="12.0,53.6 43.7,34.9 46.1,29.2 52.0,27.0 59.1,27.6 59.1,52.8 12.0,78.0" fill="#5e5e5e" /><polygon points="59.1,27.6 66.0,27.5 72.9,30.8 76.1,35.7 107.8,54.4 107.8,78.0 59.1,52.0" fill="#a9a9a9" /><polygon points="2.3,83.6 59.1,52.0 117.5,82.8 59.9,116.9" fill="#cfcfcf" /><polygon points="12.6,83.8 59.2,57.9 107.1,83.1 59.9,111.1" fill="#a9a9a9" /><polygon points="19.5,83.9 59.3,61.8 100.2,83.3 59.9,107.2" fill="#d6d6d6" /><polygon points="26.5,84.0 59.4,65.7 93.3,83.5 59.9,103.3" fill="#9f9f9f" /><polygon points="33.3,84.1 59.5,69.5 86.3,83.7 59.8,99.4" fill="#cdcdcd" /><polygon points="40.2,84.2 59.6,73.5 79.4,83.9 59.8,95.5" fill="#b0b0b0" /><polygon points="48.3,84.3 59.7,78.0 71.3,84.2 59.8,91.0" fill="#c6c6c6" /><path d="M84 81 L96 87.5 L88 92" stroke="#555" stroke-width="2.2" fill="none"/></svg></div>
<div class="abs lb" style="left:287px;top:361px;"><span style="letter-spacing:0.7px">Air Treat</span><br>ment Air</div>
<div class="abs th" style="left:24px;top:426px;"><svg width="120" height="120" viewBox="0 0 120 120"><polygon points="17.9,97.4 70.6,68.2 101.5,86.0 51.1,115.3" fill="#a9a9a9" /><polygon points="17.9,97.4 51.1,115.3 51.1,118.5 17.9,100.6" fill="#bcbcbc" /><polygon points="51.1,115.3 101.5,86.0 101.5,89.3 51.1,118.5" fill="#666" /><polygon points="35.7,22.7 51.9,30.8 51.9,95.0 35.7,85.2" fill="#a1a1a1" /><polygon points="51.9,30.8 70.6,20.3 70.6,84.4 51.9,95.0" fill="#585858" /><polygon points="35.7,22.7 55.2,11.4 70.6,20.3 51.9,30.8" fill="#b5b5b5" /><polygon points="41.4,22.7 55.2,14.6 65.7,20.3 51.9,28.1" fill="#6b6b6b" /><polygon points="55.2,14.6 65.7,20.3 60.0,23.5 55.2,21.0" fill="#a5a5a5" /></svg></div>
<div class="abs lb" style="left:23px;top:557px;"><span style="letter-spacing:0.7px">Air Treat</span><br>ment Extr</div>
<div class="abs th" style="left:156px;top:426px;"><svg width="120" height="120" viewBox="0 0 120 120"><polygon points="29.5,72.2 45.8,81.2 45.8,116.9 14.1,98.2" fill="#ededed" /><polygon points="45.8,81.2 75.0,65.7 105.0,84.4 45.8,116.9" fill="#c2c2c2" /><polygon points="14.1,98.2 45.8,116.9 105.0,84.4 105.0,86.0 45.8,118.8 14.1,100.0" fill="#d4d4d4" /><polygon points="29.5,26.0 45.8,34.9 45.8,81.2 29.5,72.2" fill="#a1a1a1" /><polygon points="45.8,34.9 75.0,20.3 75.0,65.7 45.8,81.2" fill="#585858" /><polygon points="29.5,26.0 57.1,10.6 75.0,20.3 45.8,34.9" fill="#b5b5b5" /><polygon points="36.0,26.0 57.1,13.8 70.1,20.3 47.4,31.3" fill="#6b6b6b" /><polygon points="57.1,13.8 70.1,20.3 63.0,24.0 57.1,21.0" fill="#a5a5a5" /></svg></div>
<div class="abs lb" style="left:155px;top:557px;"><span style="letter-spacing:0.7px">Air Treat</span><br>ment Extr</div>
<div class="abs th" style="left:288px;top:426px;"><svg width="120" height="120" viewBox="0 0 120 120"><polygon points="2.3,69.8 79.4,25.2 118.3,47.9 40.4,92.5" fill="#bdbdbd" /><polygon points="6.5,69.8 79.4,27.6 114.3,47.9 40.4,90.3" fill="#a7a7a7" /><polygon points="2.3,69.8 40.4,92.5 40.4,95.3 2.3,72.4" fill="#c4c4c4" /><polygon points="40.4,92.5 118.3,47.9 118.3,50.7 40.4,95.3" fill="#666" /></svg></div>
<div class="abs lb" style="left:287px;top:557px;">Air treat<br>ment Vent</div>
<div class="abs th" style="left:24px;top:622px;"><svg width="120" height="120" viewBox="0 0 120 120"><defs><linearGradient id="g10a" x1="0" y1="0" x2="1" y2="1"><stop offset="0" stop-color="#e2e2e2"/><stop offset="0.55" stop-color="#dcdcdc"/><stop offset="1" stop-color="#9a9a9a"/></linearGradient><linearGradient id="g10b" x1="0" y1="0" x2="1" y2="1"><stop offset="0" stop-color="#8a8a8a"/><stop offset="0.3" stop-color="#e8e8e8"/><stop offset="1" stop-color="#f2f2f2"/></linearGradient></defs><ellipse cx="60" cy="62" rx="42.5" ry="25.2" fill="url(#g10a)" stroke="#bdbdbd" stroke-width="1" transform="rotate(3 60 62)"/><ellipse cx="60" cy="60.5" rx="31" ry="18.5" fill="url(#g10b)" transform="rotate(3 60 60.5)"/><ellipse cx="60" cy="58" rx="27.5" ry="15.8" fill="#b6b6b6" transform="rotate(3 60 58)"/></svg></div>
<div class="abs lb" style="left:23px;top:753px;">Air treat<br>ment Vent</div>
<div class="abs" style="left:152px;top:746px;width:124px;height:64px;background:#d6d6d6;"></div>
<div class="abs th" style="left:156px;top:622px;"><svg width="120" height="120" viewBox="0 0 120 120"><polygon points="15.7,118.0 19.8,93.3 26.3,78.7 46.6,68.2 60.4,75.5 70.1,91.7 73.4,118.0" fill="#e4e4e4" /><path d="M27 80 L27 118 M39 73 L39 118 M51 72 L51 118 M63 82 L63 118" stroke="#aaa" stroke-width="4"/><path d="M24.0 90.0 L20.5 118" stroke="#222" stroke-width="2.5"/><path d="M34.5 78.0 L34.5 118" stroke="#222" stroke-width="2.2"/><path d="M46.6 70.0 L46.6 118" stroke="#222" stroke-width="2.4"/><path d="M58.5 78.0 L59.0 118" stroke="#222" stroke-width="2.0"/><path d="M15.7 118 L19.8 93.3 L26.3 78.7 M70.1 91.7 L73.4 118" stroke="#222" stroke-width="1.8" fill="none"/><polygon points="88.0,52.8 97.7,57.6 93.0,62.0 91.2,67.4 81.5,69.0" fill="#e7c3b1" /><path d="M90 56 L97 59 L92 65 L88 66 Z" fill="#3a2a22"/><polygon points="26.3,78.7 31.2,63.3 65.3,22.7 80.7,18.7 101.8,33.3 101.8,48.7 88.0,52.8 79.9,69.0 70.1,91.7 60.4,75.5 46.6,68.2" fill="#e9e9a4" stroke="#2e2e22" stroke-width="1.8" stroke-linejoin="round"/></svg></div>
<div class="abs lb" style="left:155px;top:753px;">Blonde Gi<br>rl</div>
<div class="abs th" style="left:288px;top:622px;"><svg width="120" height="120" viewBox="0 0 120 120"><path d="M20.9 118 L24.2 77.1 L29.1 54.4 L35.6 39.8 L56.7 15.4 Q62 11 68 10.6 L82.6 19.5 L82.6 30.8 L74.5 41.4 L63.1 51.1 Q61 58 61.5 64.1 L64.8 86.9 Q67 91 71.3 90.1 L89.1 83.6 L98.9 84.4 L90.7 90.1 L92.4 91.7 L82.6 97.4 L70.5 103.1 L69.6 118" fill="none" stroke="#8c8c8c" stroke-width="1.5" stroke-linejoin="round"/></svg></div>
<div class="abs lb" style="left:287px;top:753px;">Blonde Gi<br>rl Silhou</div>
<div class="abs th" style="left:24px;top:818px;"><svg width="120" height="120" viewBox="0 0 120 120"><path d="M34.5 120 L34.5 33.6 A25.6 25.6 0 0 1 85.7 33.6 L85.7 120" fill="#dedede" stroke="#a8a8a8" stroke-width="4"/><path d="M37.5 120 L37.5 33.6 A22.6 22.6 0 0 1 82.7 33.6 L82.7 120" fill="none" stroke="#c6c6c6" stroke-width="1"/></svg></div>
<div class="abs th" style="left:156px;top:818px;"><svg width="120" height="120" viewBox="0 0 120 120"><rect x="18.6" y="8" width="85.2" height="120" fill="#dedede" stroke="#a8a8a8" stroke-width="4"/><rect x="21.8" y="11.2" width="78.8" height="120" fill="none" stroke="#c2c2c2" stroke-width="1"/><path d="M61.2 10 L61.2 120" stroke="#a8a8a8" stroke-width="2"/></svg></div>
<div class="abs th" style="left:288px;top:818px;"><svg width="120" height="120" viewBox="0 0 120 120"><defs><linearGradient id="g15" x1="0" y1="0" x2="0" y2="1"><stop offset="0" stop-color="#fbfdff"/><stop offset="1" stop-color="#d9e6f7"/></linearGradient></defs><rect x="19.5" y="16.7" width="83.2" height="110" fill="#dcdcdc" stroke="#a8a8a8" stroke-width="2"/><rect x="18.5" y="15.7" width="85.2" height="5" fill="#a8a8a8"/><path d="M61.5 20 L61.5 120" stroke="#a8a8a8" stroke-width="2"/><rect x="24.5" y="27.5" width="30.5" height="95" fill="url(#g15)" stroke="#b5b5b5" stroke-width="1.5"/><rect x="67.5" y="27.5" width="30.5" height="95" fill="url(#g15)" stroke="#b5b5b5" stroke-width="1.5"/></svg></div>
</div>
<div class="abs" style="left:514px;top:280px;width:30px;height:840px;background:linear-gradient(90deg,#ececec 0,#ececec 2px,#f9f9f9 3px,#fbfbfb 50%,#f9f9f9 27px,#f0f0f0 28px,#f0f0f0 30px);"></div>
<div class="abs" style="left:522px;top:286px;width:16px;height:36px;border-radius:8px;background:#c2c2c2;"></div>
<div class="abs" style="left:0;top:1130px;width:560px;height:2px;background:#858585;"></div>
<div class="abs" style="left:0;top:1162px;width:560px;height:2px;background:#858585;"></div>
<div class="abs" style="left:30px;top:1180px;width:500px;height:86px;background:#5b92f5;text-align:center;font-family:'DejaVu Sans',sans-serif;font-size:24.5px;line-height:92px;color:#091a38;-webkit-text-stroke:0.3px #091a38;">Create component</div>
</div>
<div id="tabs">
<div class="abs" style="left:2px;top:2px;width:98px;height:96px;background:#fff;"></div>
<svg class="abs" style="left:25px;top:22px;overflow:visible" width="50" height="56" viewBox="0 0 50 56" fill="none" stroke="#8f8f8f" stroke-width="2" stroke-linecap="round" stroke-linejoin="round"><path d="M25 41.6 C16 34 3.500 26 3.500 16 C3.500 7 13 4 25 4 C37 4 46.500 7 46.500 16 C46.500 26 34 34 25 41.6 Z" stroke-width="2.2"/><path d="M25 4 C15.700 4 15.700 26 25 41.6 M25 4 C34.300 4 34.300 26 25 41.6 M25 4 C5 4 5 24 25 41.6 M25 4 C45 4 45 24 25 41.6" stroke-width="1.9"/><rect x="21" y="44" width="8" height="8" rx="1"/></svg>
<svg class="abs" style="left:28px;top:124px;overflow:visible" width="44" height="52" viewBox="0 0 44 52" fill="none" stroke="#8f8f8f" stroke-width="2" stroke-linecap="round" stroke-linejoin="round"><path d="M3.5 6 Q3.5 3 6.5 3 L37.5 3 Q40.5 3 40.5 6 L40.5 28 Q40.5 31.5 37 31.5 L27.5 31.5 L27.5 37 C27.5 40 28.5 42 28.5 45 C28.5 48 26 50 22 50 C18 50 15.500 48 15.500 45 C15.5 42 16.5 40 16.5 37 L16.5 31.5 L7 31.5 Q3.5 31.5 3.5 28 Z"/><path d="M3.5 22.500 L40.5 22.500" stroke-width="2.4"/><path d="M12 13 L12 22 M22 12 L22 22 M32 13 L32 22" stroke-width="3" stroke-linecap="butt"/></svg>
<svg class="abs" style="left:24px;top:223px;overflow:visible" width="52" height="54" viewBox="0 0 52 54" fill="none" stroke="#8f8f8f" stroke-width="2" stroke-linecap="round" stroke-linejoin="round"><path d="M26 3.5 Q28 3.5 30 4.600 L46.5 14 Q49.500 16.500 46.5 19 L30 28.400 Q26 30.500 22 28.400 L5.500 19 Q2.500 16.500 5.500 14 L22 4.600 Q24 3.5 26 3.5 Z"/><path d="M3.800 25 Q3 27.500 5.500 29 L22 38.400 Q26 40.500 30 38.400 L46.500 29 Q49 27.500 48.200 25"/><path d="M3.800 35 Q3 37.500 5.500 39 L22 48.400 Q26 50.500 30 48.400 L46.500 39 Q49 37.500 48.200 35"/></svg>
<svg class="abs" style="left:23px;top:324px;overflow:visible" width="54" height="48" viewBox="0 0 54 48" fill="none" stroke="#8f8f8f" stroke-width="2" stroke-linecap="round" stroke-linejoin="round"><path d="M6 10.500 L14 10.500 L17 5 Q18.500 2.500 21 2.500 L33 2.500 Q35.500 2.500 37 5 L40 10.500 L48 10.500 Q51 10.500 51 13.500 L51 38.500 Q51 41.500 48 41.500 L6 41.500 Q3 41.500 3 38.500 L3 13.500 Q3 10.500 6 10.500 Z"/><path d="M6.500 10 L6.500 7.500 Q6.500 6 8 6 L11.500 6 Q13 6 13 7.500 L13 10"/><path d="M3 21 L51 21" stroke-width="1.6"/><circle cx="27.500" cy="29" r="15.500" fill="#f2f2f2"/><circle cx="27.500" cy="29" r="10.500"/></svg>
<svg class="abs" style="left:24px;top:424px;overflow:visible" width="50" height="52" viewBox="0 0 50 52" fill="none" stroke="#8f8f8f" stroke-width="2" stroke-linecap="round" stroke-linejoin="round"><path d="M3 2.700 L47 2.700 L47 9.500 L38 9.500 Q32.500 9.500 32.500 16 L32.500 36 Q32.500 42.500 38 42.500 L47 42.500 L47 49.300 L3 49.300 L3 42.500 L12 42.500 Q19.500 42.500 19.500 36 L19.500 16 Q19.500 9.500 12 9.500 L3 9.500 Z" stroke-linejoin="miter"/></svg>
<svg class="abs" style="left:24px;top:530px;overflow:visible" width="52" height="40" viewBox="0 0 52 40" fill="none" stroke="#8f8f8f" stroke-width="2" stroke-linecap="round" stroke-linejoin="round"><path d="M13.500 36.500 Q3 36.500 3 26.500 Q3 17.500 12.500 16.500 Q15 3 27.500 3 Q38 3 40.500 14.500 Q49.500 16 49.500 26 Q49.500 36.500 39 36.500 Z"/><path d="M26 31.500 L26 19 M21 23.500 L26 18.500 L31 23.500" stroke-width="1.700"/></svg>
<div class="abs" style="left:54px;top:1288px;width:46px;height:2px;background:#bdbdbd;"></div>
</div>
<div id="status">
<div class="abs" style="left:2142px;top:1px;width:302px;height:40px;background:#efefef;"></div>
<div class="abs" style="left:2148px;top:5px;font-family:'DejaVu Sans',sans-serif;font-size:20.6px;line-height:26px;letter-spacing:0.05px;color:#111;white-space:pre;">12'-3 13/16", -27'-1 3/8", 0"</div>
<svg class="abs" style="left:20px;top:2px" width="360" height="46" viewBox="0 0 360 46"><g fill="none" stroke="#dadada" stroke-width="3.5" transform="translate(1.5 1.5)"><circle cx="21" cy="21" r="17"/></g><g fill="none" stroke="#fdfdfd" stroke-width="3.600"><circle cx="21" cy="21" r="17"/><path d="M12 36 L12 13.500 L21.500 24 L31 13.500 L31 31" stroke-linejoin="miter"/></g></svg>
<div class="abs" style="left:70px;top:3.5px;font-family:'Liberation Serif','DejaVu Serif',serif;font-weight:bold;font-size:37px;line-height:40px;letter-spacing:2.7px;color:#fdfdfd;text-shadow:1.5px 1.5px 0.5px #d6d6d6;white-space:pre;">www.MacZ.com</div>
</div>
</body>
</html>
